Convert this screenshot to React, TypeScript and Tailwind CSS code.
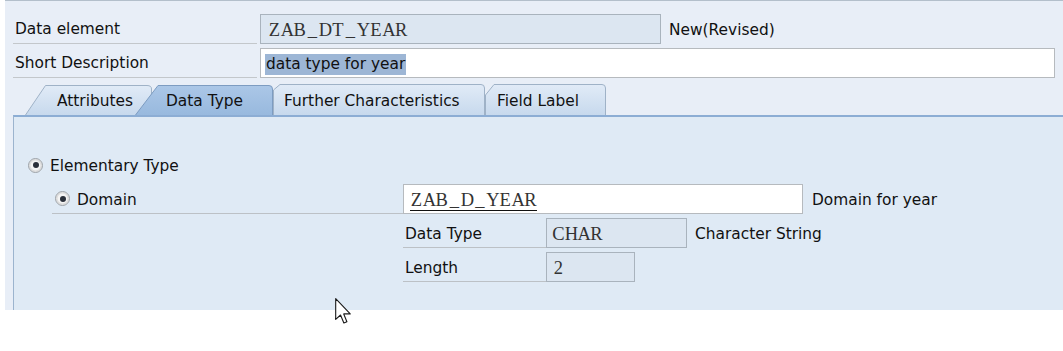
import React from "react";

const sans = "[font-family:DejaVu_Sans,sans-serif] text-[15.4px] text-[#111]";
const serif = "[font-family:Liberation_Serif,serif] text-[18.5px] text-[#333]";

function Mono({ text, underline = false }: { text: string; underline?: boolean }) {
  return (
    <span
      className={`flex leading-[20px] ${serif} ${underline ? "border-b-[1.5px] border-[#111] text-[#111]" : ""}`}
    >
      {text.split("").map((c, i) => (
        <span key={i} className="inline-block w-[12.7px] text-center">
          {c === " " ? "\u00a0" : c}
        </span>
      ))}
    </span>
  );
}

function TabShape({
  w,
  d,
  gid,
  top,
  bottom,
  stroke,
}: {
  w: number;
  d: string;
  gid: string;
  top: string;
  bottom: string;
  stroke: string;
}) {
  return (
    <svg className="absolute left-0 top-0" width={w} height={31} aria-hidden>
      <defs>
        <linearGradient id={gid} x1="0" y1="0" x2="0" y2="1">
          <stop offset="0" stopColor={top} />
          <stop offset="1" stopColor={bottom} />
        </linearGradient>
      </defs>
      <path d={d} fill={`url(#${gid})`} stroke={stroke} strokeWidth={1} />
    </svg>
  );
}

function Radio() {
  return (
    <div className="w-[15px] h-[15px] rounded-full border border-[#9ba1a7] bg-[#f4f4f4] flex items-center justify-center shadow-[inset_0_0_0_1.5px_#dcdcdc]">
      <div className="w-[6px] h-[6px] rounded-full bg-[#2a303a]" />
    </div>
  );
}

export default function App() {
  return (
    <div className="relative w-[1063px] h-[351px] bg-white overflow-hidden">
      <div className="ml-[5px] bg-[#e8eef7] border-t border-[#b3bfcb] pt-[13px]">
        {/* Row 1 */}
        <div className="flex items-center h-[30px] pl-[8px]">
          <div className={`w-[244px] h-full border-b border-[#c3c7cb] flex items-center pl-[2px] pt-[3px] ${sans}`}>
            Data element
          </div>
          <div className="ml-[3px] w-[401px] h-full border border-[#a9b3bd] bg-[#dce6f1] flex items-center pl-[7px] pt-[1px]">
            <Mono text="ZAB_DT_YEAR" />
          </div>
          <div className={`ml-[8px] pt-[3px] ${sans}`}>New(Revised)</div>
        </div>
        {/* Row 2 */}
        <div className="flex items-center h-[30px] pl-[8px] mt-[4px]">
          <div className={`w-[244px] h-full border-b border-[#c3c7cb] flex items-center pl-[2px] pt-[3px] ${sans}`}>
            Short Description
          </div>
          <div className={`ml-[3px] w-[795px] h-full border border-[#b6babe] bg-white flex items-center pl-[4px] pt-[2px] ${sans}`}>
            <span className="bg-[#9db6d5] px-[1px] leading-[21px]">data type for year</span>
          </div>
        </div>
        {/* Tabs */}
        <div className="flex items-end h-[31px] mt-[6px] pl-[20px]">
          <div className="relative w-[127px] h-[31px]">
            <TabShape
              w={127}
              gid="g1"
              top="#e1ebf7"
              bottom="#c7d9ed"
              stroke="#9fb2c7"
              d="M0.5 31 L20.5 1.5 L122 1.5 Q126.5 1.5 126.5 5 L126.5 31"
            />
            <span className={`relative flex items-center h-full pl-[32px] pt-[4px] ${sans}`}>Attributes</span>
          </div>
          <div className="relative z-10 w-[138px] h-[31px] ml-[-17px]">
            <TabShape
              w={138}
              gid="g2"
              top="#abc7e7"
              bottom="#98b9de"
              stroke="#7d9cc1"
              d="M0.5 31 L23 1.5 L134 1.5 Q137.5 1.5 137.5 5 L137.5 31"
            />
            <span className={`relative flex items-center h-full pl-[31px] pt-[4px] ${sans}`}>Data Type</span>
          </div>
          <div className="relative w-[212px] h-[31px]">
            <TabShape
              w={212}
              gid="g3"
              top="#e1ebf7"
              bottom="#c7d9ed"
              stroke="#9fb2c7"
              d="M0.5 31 L0.5 6 L7 0.5 L208 0.5 Q211.5 0.5 211.5 4 L211.5 31"
            />
            <span className={`relative flex items-center h-full pl-[11px] pt-[4px] ${sans}`}>Further Characteristics</span>
          </div>
          <div className="relative w-[121px] h-[31px]">
            <TabShape
              w={121}
              gid="g4"
              top="#e1ebf7"
              bottom="#c7d9ed"
              stroke="#9fb2c7"
              d="M0.5 31 L0.5 11 L9 0.5 L117 0.5 Q120.5 0.5 120.5 4 L120.5 31"
            />
            <span className={`relative flex items-center h-full pl-[12px] pt-[4px] ${sans}`}>Field Label</span>
          </div>
        </div>
        {/* Panel */}
        <div className="ml-[8px] bg-[#dfeaf5] border-l border-[#9cb4ce] border-t-2 border-t-[#8cadd4] pt-[33px] pb-[28px]">
          <div className="flex items-center h-[30px] pl-[14px]">
            <Radio />
            <span className={`ml-[7px] pt-[4px] ${sans}`}>Elementary Type</span>
          </div>
          <div className="flex items-center h-[30px] mt-[4px]">
            <div className={`ml-[38px] w-[351px] h-full border-b border-[#bcc1c6] flex items-center pl-[3px] ${sans}`}>
              <Radio />
              <span className="ml-[7px] pt-[4px]">Domain</span>
            </div>
            <div className="w-[400px] h-full border border-[#b6babe] bg-white flex items-center pl-[6px] pt-[3px]">
              <Mono text="ZAB_D_YEAR" underline />
            </div>
            <span className={`ml-[9px] pt-[4px] ${sans}`}>Domain for year</span>
          </div>
          <div className="flex items-center h-[30px] mt-[4px]">
            <div className={`ml-[389px] w-[143px] h-full border-b border-[#bcc1c6] flex items-center pl-[2px] pt-[4px] ${sans}`}>
              Data Type
            </div>
            <div className="w-[141px] h-full border border-[#a9b3bd] bg-[#dce6f1] flex items-center pl-[5px] pt-[1px]">
              <Mono text="CHAR" />
            </div>
            <span className={`ml-[8px] pt-[4px] ${sans}`}>Character String</span>
          </div>
          <div className="flex items-center h-[30px] mt-[4px]">
            <div className={`ml-[389px] w-[143px] h-full border-b border-[#bcc1c6] flex items-center pl-[2px] pt-[4px] ${sans}`}>
              Length
            </div>
            <div className="w-[89px] h-full border border-[#a9b3bd] bg-[#dce6f1] flex items-center pl-[5px] pt-[1px]">
              <Mono text="2" />
            </div>
          </div>
        </div>
      </div>
      {/* Mouse cursor */}
      <svg className="absolute left-[335px] top-[298px]" width={18} height={27} viewBox="0 0 13 19.5" aria-hidden>
        <path
          d="M0.5 0.5 L0.5 15.5 L4 12.3 L6.4 18 L8.6 17.1 L6.3 11.5 L11 11.5 Z"
          fill="#fff"
          stroke="#1a1a1a"
          strokeWidth={0.8}
          strokeLinejoin="round"
        />
      </svg>
    </div>
  );
}
